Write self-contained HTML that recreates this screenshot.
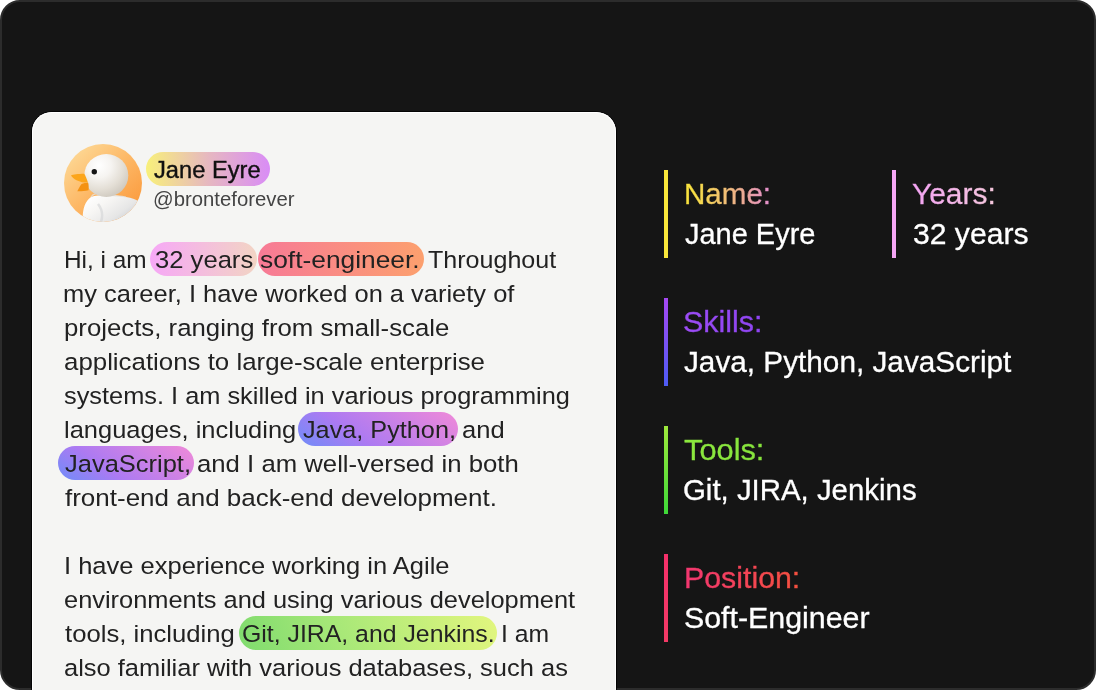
<!DOCTYPE html>
<html><head><meta charset="utf-8">
<style>
html,body{margin:0;padding:0;width:1096px;height:690px;overflow:hidden;background:#fff;}
body{font-family:"Liberation Sans",sans-serif;position:relative;}
.frame{position:absolute;left:0;top:0;width:1096px;height:690px;box-sizing:border-box;border:2px solid #2c2c2c;border-radius:20px;background:#151515;overflow:hidden;}
.card{position:absolute;left:32px;top:112px;width:584px;height:600px;background:#f5f5f3;border-radius:20px 20px 0 0;box-shadow:inset 0 0 0 1px #fff,0 0 0 1px rgba(0,0,0,.8);}
.t{position:absolute;white-space:pre;line-height:40px;color:#222;transform-origin:0 0;}
.pill{position:absolute;height:34px;border-radius:17px;}
.lab{position:absolute;white-space:pre;line-height:40px;transform-origin:0 0;-webkit-background-clip:text;background-clip:text;color:transparent;-webkit-text-stroke:0.35px rgba(0,0,0,0);}
.val{position:absolute;white-space:pre;line-height:40px;color:#fff;transform-origin:0 0;-webkit-text-stroke:0.3px #fff;}
.bar{position:absolute;width:4px;height:88px;}
</style></head>
<body>
<div class="frame"></div>
<div class="card"></div>

<svg style="position:absolute;left:64px;top:144px" width="78" height="78" viewBox="0 0 78 78">
  <defs>
    <linearGradient id="bg" x1="0.15" y1="0.05" x2="0.9" y2="0.85">
      <stop offset="0" stop-color="#fdd895"/><stop offset="0.5" stop-color="#fdb866"/><stop offset="1" stop-color="#fb9b3e"/>
    </linearGradient>
    <radialGradient id="head" cx="0.33" cy="0.27" r="0.8">
      <stop offset="0" stop-color="#ffffff"/><stop offset="0.35" stop-color="#f6f4f1"/><stop offset="0.7" stop-color="#e3ded5"/><stop offset="1" stop-color="#cdc7bd"/>
    </radialGradient>
    <linearGradient id="body" x1="0" y1="0.2" x2="1" y2="0.8">
      <stop offset="0" stop-color="#ffffff"/><stop offset="0.3" stop-color="#f7f6f4"/><stop offset="0.65" stop-color="#e6e6e6"/><stop offset="1" stop-color="#bfc4cc"/>
    </linearGradient>
    <clipPath id="cc"><circle cx="39" cy="39" r="39"/></clipPath>
  </defs>
  <g clip-path="url(#cc)">
    <rect width="78" height="78" fill="url(#bg)"/>
    <path d="M19 78 C18 68 20 58 27 53 C36 50 52 51 62 53 C68 54 74 56 80 60 L80 78 Z" fill="url(#body)"/>
    <path d="M34 60 C38 65 39 72 37 78" stroke="#d2d3d6" stroke-width="2.5" fill="none" opacity="0.6"/>
    <path d="M27 53 C30 48 34 50 42 51 C52 52 58 52 62 53" stroke="#e4e2de" stroke-width="1.2" fill="none" opacity="0.8"/>
    <ellipse cx="42.3" cy="31.5" rx="22" ry="21.5" fill="url(#head)"/>
    <path d="M7 31.5 C9 30.3 14 30 20.3 29.8 C21.5 32 23 35.5 24 38.8 C20 38.8 16 38 12.5 36.3 C10 35 8 33.2 7 31.5 Z" fill="#fca51a"/>
    <path d="M13.3 47.2 C14.8 44.5 16 41.5 17.6 40 C19.5 39.2 22 38.8 24.2 38.8 C24.8 41 24.8 44 24.5 46.3 C20.5 47 16.5 47.4 13.3 47.2 Z" fill="#f49212"/>
    <circle cx="30.3" cy="27.8" r="2.7" fill="#151515"/>
  </g>
</svg>

<div class="pill" style="left:146px;top:152px;width:124px;background:linear-gradient(90deg,#f8f07a,#e6b8c0 50%,#d98cf6);"></div>
<div class="t" style="left:153.66px;top:150px;font-size:24.5px;transform:scaleX(0.9669);color:#111;-webkit-text-stroke:0.4px #111;">Jane Eyre</div>
<div class="t" style="left:152.95px;top:179px;font-size:20px;transform:scaleX(1.0161);color:#444;">@bronteforever</div>

<div class="pill" style="left:150.2px;top:242px;width:107px;background:linear-gradient(90deg,#f6a8f6,#f2d4c4);"></div>
<div class="pill" style="left:258.3px;top:242px;width:165.5px;background:linear-gradient(90deg,#f77a96,#fca06e);"></div>
<div class="pill" style="left:298.3px;top:412px;width:159.7px;background:linear-gradient(35deg,#6f8cf8 0%,#ac7af2 35%,#f08ad8 100%);"></div>
<div class="pill" style="left:57.8px;top:446px;width:136px;background:linear-gradient(35deg,#6f8cf8 0%,#ac7af2 35%,#f08ad8 100%);"></div>
<div class="pill" style="left:238.5px;top:616px;width:258px;background:linear-gradient(70deg,#7fdb6e 0%,#a8e878 40%,#e2f67e 100%);"></div>

<div class="t" style="left:64.10px;top:240px;font-size:24.5px;transform:scaleX(0.9948);">Hi, i am</div>
<div class="t" style="left:154.70px;top:240px;font-size:24.5px;transform:scaleX(1.0449);">32 years</div>
<div class="t" style="left:259.78px;top:240px;font-size:24.5px;transform:scaleX(1.0752);">soft-engineer.</div>
<div class="t" style="left:428.41px;top:240px;font-size:24.5px;transform:scaleX(1.0230);">Throughout</div>
<div class="t" style="left:63.47px;top:274px;font-size:24.5px;transform:scaleX(1.0391);">my career, I have worked on a variety of</div>
<div class="t" style="left:63.78px;top:308px;font-size:24.5px;transform:scaleX(1.0521);">projects, ranging from small-scale</div>
<div class="t" style="left:64.22px;top:342px;font-size:24.5px;transform:scaleX(1.0550);">applications to large-scale enterprise</div>
<div class="t" style="left:64.32px;top:376px;font-size:24.5px;transform:scaleX(1.0349);">systems. I am skilled in various programming</div>
<div class="t" style="left:63.77px;top:410px;font-size:24.5px;transform:scaleX(1.0395);">languages, including</div>
<div class="t" style="left:303.12px;top:410px;font-size:24.5px;transform:scaleX(1.0303);">Java, Python,</div>
<div class="t" style="left:462.43px;top:410px;font-size:24.5px;transform:scaleX(1.0433);">and</div>
<div class="t" style="left:64.61px;top:444px;font-size:24.5px;transform:scaleX(1.0398);">JavaScript,</div>
<div class="t" style="left:196.72px;top:444px;font-size:24.5px;transform:scaleX(1.0502);">and I am well-versed in both</div>
<div class="t" style="left:64.89px;top:478px;font-size:24.5px;transform:scaleX(1.0607);">front-end and back-end development.</div>
<div class="t" style="left:63.96px;top:546px;font-size:24.5px;transform:scaleX(1.0406);">I have experience working in Agile</div>
<div class="t" style="left:64.35px;top:580px;font-size:24.5px;transform:scaleX(1.0368);">environments and using various development</div>
<div class="t" style="left:64.86px;top:614px;font-size:24.5px;transform:scaleX(1.0481);">tools, including</div>
<div class="t" style="left:241.96px;top:614px;font-size:24.5px;transform:scaleX(1.0134);">Git, JIRA, and Jenkins.</div>
<div class="t" style="left:501.02px;top:614px;font-size:24.5px;transform:scaleX(1.0085);">I am</div>
<div class="t" style="left:64.33px;top:648px;font-size:24.5px;transform:scaleX(1.0394);">also familiar with various databases, such as</div>

<div class="bar" style="left:664px;top:170px;background:#f8e63a;"></div>
<div class="lab" style="left:683.67px;top:174px;font-size:29px;transform:scaleX(1.0193);background-image:linear-gradient(90deg,#fae53a 0%,#f6d850 20%,#f0bc78 50%,#eaa59a 72%,#e48ed0 100%);">Name:</div>
<div class="val" style="left:684.54px;top:214px;font-size:29px;transform:scaleX(0.9987);">Jane Eyre</div>
<div class="bar" style="left:892px;top:170px;background:#f5a6f5;"></div>
<div class="lab" style="left:912.22px;top:174px;font-size:29px;transform:scaleX(1.0318);background-image:linear-gradient(90deg,#f3a3f3,#f5c8dc);">Years:</div>
<div class="val" style="left:912.54px;top:214px;font-size:29px;transform:scaleX(1.0387);">32 years</div>
<div class="bar" style="left:664px;top:298px;background:linear-gradient(180deg,#a648f2,#4d5cf5);"></div>
<div class="lab" style="left:683.13px;top:302px;font-size:29px;transform:scaleX(1.0489);background-image:linear-gradient(90deg,#9c4cf5,#8e44f2);">Skills:</div>
<div class="val" style="left:684.02px;top:342px;font-size:29px;transform:scaleX(1.0256);">Java, Python, JavaScript</div>
<div class="bar" style="left:664px;top:426px;background:linear-gradient(180deg,#9ee83c,#3ed838);"></div>
<div class="lab" style="left:684.30px;top:430px;font-size:29px;transform:scaleX(1.0616);background-image:linear-gradient(90deg,#8ce83e,#86e43c);">Tools:</div>
<div class="val" style="left:683.47px;top:470px;font-size:29px;transform:scaleX(1.0136);">Git, JIRA, Jenkins</div>
<div class="bar" style="left:664px;top:554px;background:linear-gradient(180deg,#f5306a,#f23a66);"></div>
<div class="lab" style="left:683.72px;top:558px;font-size:29px;transform:scaleX(1.0454);background-image:linear-gradient(90deg,#f23670,#f5503e);">Position:</div>
<div class="val" style="left:683.53px;top:598px;font-size:29px;transform:scaleX(1.0464);">Soft-Engineer</div>
</body></html>
